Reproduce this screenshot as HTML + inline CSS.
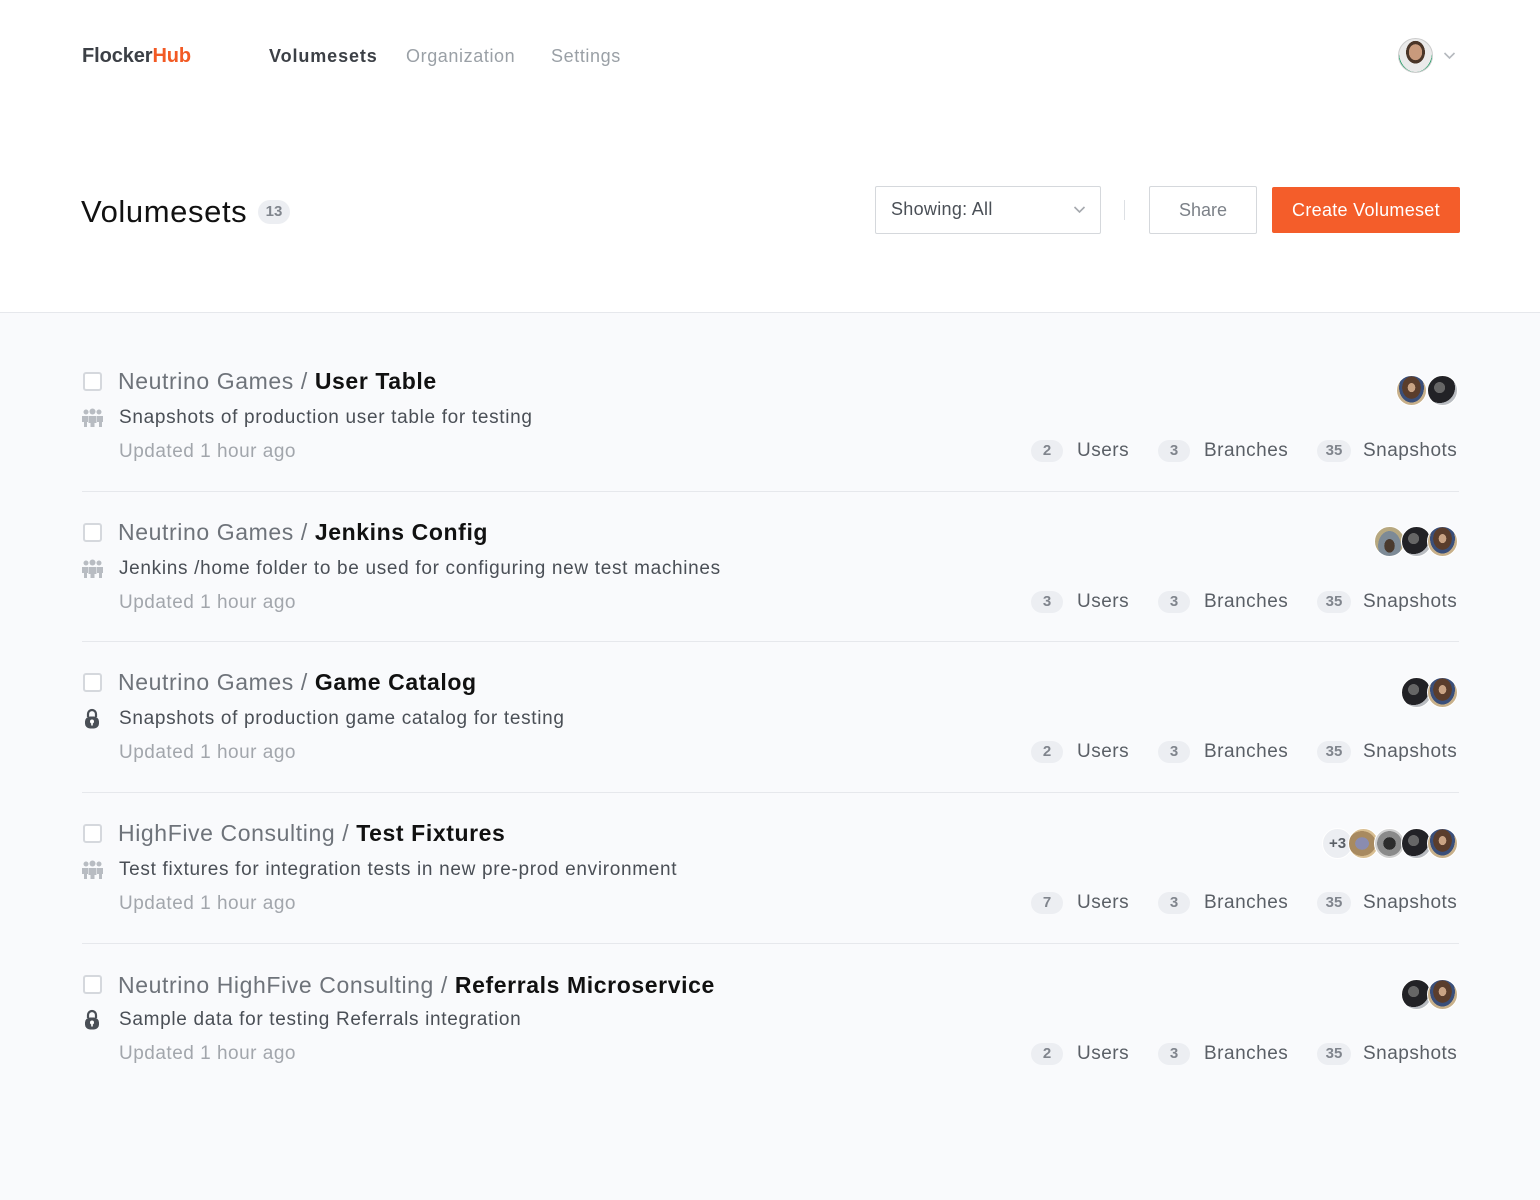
<!DOCTYPE html>
<html><head><meta charset="utf-8"><style>
*{margin:0;padding:0;box-sizing:border-box}
body{width:1540px;height:1200px;background:#f9fafc;font-family:"Liberation Sans",sans-serif;position:relative;overflow:hidden}
.top{position:absolute;left:0;top:0;width:1540px;height:313px;background:#fff;border-bottom:1px solid #e6e8ec}
.a{position:absolute;white-space:nowrap}
.cb{position:absolute;width:19px;height:19px;border:2px solid #d5d8dd;border-radius:3px;background:#fff}
.t{font-size:23px;line-height:30px;color:#6e737a;letter-spacing:.6px}
.t b{color:#111;font-weight:bold}
.d{font-size:19px;line-height:26px;color:#4a4f56;letter-spacing:.68px}
.u{font-size:19px;line-height:26px;color:#a2a6ac;letter-spacing:.5px}
.pill{position:absolute;height:22px;border-radius:11px;background:#eceef2;color:#80858d;font-size:15px;font-weight:bold;line-height:22px;text-align:center}
.lbl{font-size:19px;line-height:26px;color:#5a5f66;letter-spacing:.5px}
.av{position:absolute;width:31px;height:31px;border-radius:50%;border:1px solid #fff}
.A{background:radial-gradient(ellipse at 50% 40%,#c9a384 0 18%,#5a3d2c 19% 45%,#3a4f7a 46% 60%,#c8b08a 61%)}
.B{background:radial-gradient(ellipse at 40% 40%,#666 0 22%,#222226 23% 62%,#b9bcc1 63%)}
.C{background:radial-gradient(ellipse at 50% 65%,#4a3a2e 0 25%,#7d8a96 26% 55%,#b7a880 56%)}
.D{background:radial-gradient(ellipse at 45% 50%,#8a8cb0 0 30%,#a88a60 31% 60%,#d9bf92 61%)}
.E{background:radial-gradient(ellipse at 50% 50%,#2c2c2c 0 30%,#8a8a8a 31% 60%,#d0d0d0 61%)}
.div{position:absolute;left:82px;width:1377px;height:1px;background:#e6e8ec}
.nav{font-size:18px;line-height:22px;letter-spacing:.6px}
</style></head><body>
<div class="top"></div>
<div class="a" style="left:82px;top:44px;font-size:20px;line-height:24px;font-weight:bold;color:#3c4046;letter-spacing:-.1px">Flocker<span style="color:#f25a24">Hub</span></div>
<div class="a nav" style="left:269px;top:45px;font-weight:bold;color:#3c4046;letter-spacing:.9px">Volumesets</div>
<div class="a nav" style="left:406px;top:45px;color:#9aa0a6">Organization</div>
<div class="a nav" style="left:551px;top:45px;color:#9aa0a6">Settings</div>
<div class="av" style="left:1398px;top:38px;width:35px;height:35px;border:1px solid #ccc;background:radial-gradient(ellipse at 50% 40%,#c99a7c 0 28%,#4a3528 29% 40%,#eaeaea 41% 70%,#2aa36f 71%)"></div>
<svg class="a" style="left:1443px;top:51px" width="13" height="9" viewBox="0 0 13 9"><path d="M1.5 2l5 5 5-5" fill="none" stroke="#b5b9be" stroke-width="1.6"/></svg>

<div class="a" style="left:81px;top:193px;font-size:31px;line-height:38px;color:#111;letter-spacing:.6px">Volumesets</div>
<div class="pill" style="left:258px;top:200px;width:32px;height:24px;line-height:24px;border-radius:12px">13</div>

<div class="a" style="left:875px;top:186px;width:226px;height:48px;border:1px solid #d5d8dc;border-radius:2px;background:#fff"></div>
<div class="a" style="left:891px;top:197px;font-size:18px;line-height:24px;color:#4a4f56;letter-spacing:.3px">Showing: All</div>
<svg class="a" style="left:1073px;top:205px" width="13" height="9" viewBox="0 0 13 9"><path d="M1.5 2l5 5 5-5" fill="none" stroke="#a5a9ae" stroke-width="1.6"/></svg>
<div class="a" style="left:1124px;top:200px;width:1px;height:20px;background:#dde0e4"></div>
<div class="a" style="left:1149px;top:186px;width:108px;height:48px;border:1px solid #d5d8dc;border-radius:2px;background:#fff;text-align:center;font-size:18px;line-height:46px;color:#7c8188">Share</div>
<div class="a" style="left:1272px;top:187px;width:188px;height:46px;background:#f45d2a;border-radius:2px;text-align:center;font-size:18px;line-height:46px;color:#fff;letter-spacing:.3px">Create Volumeset</div>

<!-- Row 1 -->
<div class="cb" style="left:83px;top:372px"></div>
<div class="a t" style="left:118px;top:366px">Neutrino Games / <b>User Table</b></div>
<svg class="a" style="left:82px;top:408px" width="21" height="19" viewBox="0 0 21 19" fill="#b8bcc2"><circle cx="4" cy="4" r="2.5"/><circle cx="10.5" cy="3.5" r="3"/><circle cx="17" cy="4" r="2.5"/><path d="M0 8h6v6H5v5H2v-5H0z"/><path d="M15 8h6v6h-1v5h-3v-5h-2z"/><path d="M6.5 8h8v7h-2v4h-4v-4h-2z"/></svg>
<div class="a d" style="left:119px;top:405px">Snapshots of production user table for testing</div>
<div class="a u" style="left:119px;top:439px">Updated 1 hour ago</div>
<div class="av A" style="left:1396px;top:375px"></div><div class="av B" style="left:1427px;top:375px"></div>
<div class="pill" style="left:1031px;top:440px;width:32px">2</div><div class="a lbl" style="left:1077px;top:438px">Users</div>
<div class="pill" style="left:1158px;top:440px;width:32px">3</div><div class="a lbl" style="left:1204px;top:438px">Branches</div>
<div class="pill" style="left:1317px;top:440px;width:34px">35</div><div class="a lbl" style="left:1363px;top:438px">Snapshots</div>
<div class="div" style="top:491px"></div>

<!-- Row 2 -->
<div class="cb" style="left:83px;top:523px"></div>
<div class="a t" style="left:118px;top:517px">Neutrino Games / <b>Jenkins Config</b></div>
<svg class="a" style="left:82px;top:559px" width="21" height="19" viewBox="0 0 21 19" fill="#b8bcc2"><circle cx="4" cy="4" r="2.5"/><circle cx="10.5" cy="3.5" r="3"/><circle cx="17" cy="4" r="2.5"/><path d="M0 8h6v6H5v5H2v-5H0z"/><path d="M15 8h6v6h-1v5h-3v-5h-2z"/><path d="M6.5 8h8v7h-2v4h-4v-4h-2z"/></svg>
<div class="a d" style="left:119px;top:556px">Jenkins /home folder to be used for configuring new test machines</div>
<div class="a u" style="left:119px;top:590px">Updated 1 hour ago</div>
<div class="av C" style="left:1374px;top:526px"></div><div class="av B" style="left:1401px;top:526px"></div><div class="av A" style="left:1427px;top:526px"></div>
<div class="pill" style="left:1031px;top:591px;width:32px">3</div><div class="a lbl" style="left:1077px;top:589px">Users</div>
<div class="pill" style="left:1158px;top:591px;width:32px">3</div><div class="a lbl" style="left:1204px;top:589px">Branches</div>
<div class="pill" style="left:1317px;top:591px;width:34px">35</div><div class="a lbl" style="left:1363px;top:589px">Snapshots</div>
<div class="div" style="top:641px"></div>

<!-- Row 3 -->
<div class="cb" style="left:83px;top:673px"></div>
<div class="a t" style="left:118px;top:667px">Neutrino Games / <b>Game Catalog</b></div>
<svg class="a" style="left:84px;top:708px" width="16" height="21" viewBox="0 0 16 21"><path d="M4 9V6a4 4 0 0 1 8 0v3" fill="none" stroke="#4a4f56" stroke-width="2.2"/><rect x="1" y="8.5" width="14" height="12" rx="5" fill="#4a4f56"/><circle cx="8" cy="13.5" r="2" fill="#fff"/><rect x="7.2" y="14" width="1.6" height="3.5" fill="#fff"/></svg>
<div class="a d" style="left:119px;top:706px">Snapshots of production game catalog for testing</div>
<div class="a u" style="left:119px;top:740px">Updated 1 hour ago</div>
<div class="av B" style="left:1401px;top:677px"></div><div class="av A" style="left:1427px;top:677px"></div>
<div class="pill" style="left:1031px;top:741px;width:32px">2</div><div class="a lbl" style="left:1077px;top:739px">Users</div>
<div class="pill" style="left:1158px;top:741px;width:32px">3</div><div class="a lbl" style="left:1204px;top:739px">Branches</div>
<div class="pill" style="left:1317px;top:741px;width:34px">35</div><div class="a lbl" style="left:1363px;top:739px">Snapshots</div>
<div class="div" style="top:792px"></div>

<!-- Row 4 -->
<div class="cb" style="left:83px;top:824px"></div>
<div class="a t" style="left:118px;top:818px">HighFive Consulting / <b>Test Fixtures</b></div>
<svg class="a" style="left:82px;top:860px" width="21" height="19" viewBox="0 0 21 19" fill="#b8bcc2"><circle cx="4" cy="4" r="2.5"/><circle cx="10.5" cy="3.5" r="3"/><circle cx="17" cy="4" r="2.5"/><path d="M0 8h6v6H5v5H2v-5H0z"/><path d="M15 8h6v6h-1v5h-3v-5h-2z"/><path d="M6.5 8h8v7h-2v4h-4v-4h-2z"/></svg>
<div class="a d" style="left:119px;top:857px">Test fixtures for integration tests in new pre-prod environment</div>
<div class="a u" style="left:119px;top:891px">Updated 1 hour ago</div>
<div class="av" style="left:1322px;top:828px;background:#eceef2;color:#5a5f66;font-size:15px;font-weight:bold;line-height:29px;text-align:center">+3</div>
<div class="av D" style="left:1348px;top:828px"></div><div class="av E" style="left:1374px;top:828px"></div><div class="av B" style="left:1401px;top:828px"></div><div class="av A" style="left:1427px;top:828px"></div>
<div class="pill" style="left:1031px;top:892px;width:32px">7</div><div class="a lbl" style="left:1077px;top:890px">Users</div>
<div class="pill" style="left:1158px;top:892px;width:32px">3</div><div class="a lbl" style="left:1204px;top:890px">Branches</div>
<div class="pill" style="left:1317px;top:892px;width:34px">35</div><div class="a lbl" style="left:1363px;top:890px">Snapshots</div>
<div class="div" style="top:943px"></div>

<!-- Row 5 -->
<div class="cb" style="left:83px;top:975px"></div>
<div class="a t" style="left:118px;top:970px">Neutrino HighFive Consulting / <b>Referrals Microservice</b></div>
<svg class="a" style="left:84px;top:1009px" width="16" height="21" viewBox="0 0 16 21"><path d="M4 9V6a4 4 0 0 1 8 0v3" fill="none" stroke="#4a4f56" stroke-width="2.2"/><rect x="1" y="8.5" width="14" height="12" rx="5" fill="#4a4f56"/><circle cx="8" cy="13.5" r="2" fill="#fff"/><rect x="7.2" y="14" width="1.6" height="3.5" fill="#fff"/></svg>
<div class="a d" style="left:119px;top:1007px">Sample data for testing Referrals integration</div>
<div class="a u" style="left:119px;top:1041px">Updated 1 hour ago</div>
<div class="av B" style="left:1401px;top:979px"></div><div class="av A" style="left:1427px;top:979px"></div>
<div class="pill" style="left:1031px;top:1043px;width:32px">2</div><div class="a lbl" style="left:1077px;top:1041px">Users</div>
<div class="pill" style="left:1158px;top:1043px;width:32px">3</div><div class="a lbl" style="left:1204px;top:1041px">Branches</div>
<div class="pill" style="left:1317px;top:1043px;width:34px">35</div><div class="a lbl" style="left:1363px;top:1041px">Snapshots</div>
</body></html>
